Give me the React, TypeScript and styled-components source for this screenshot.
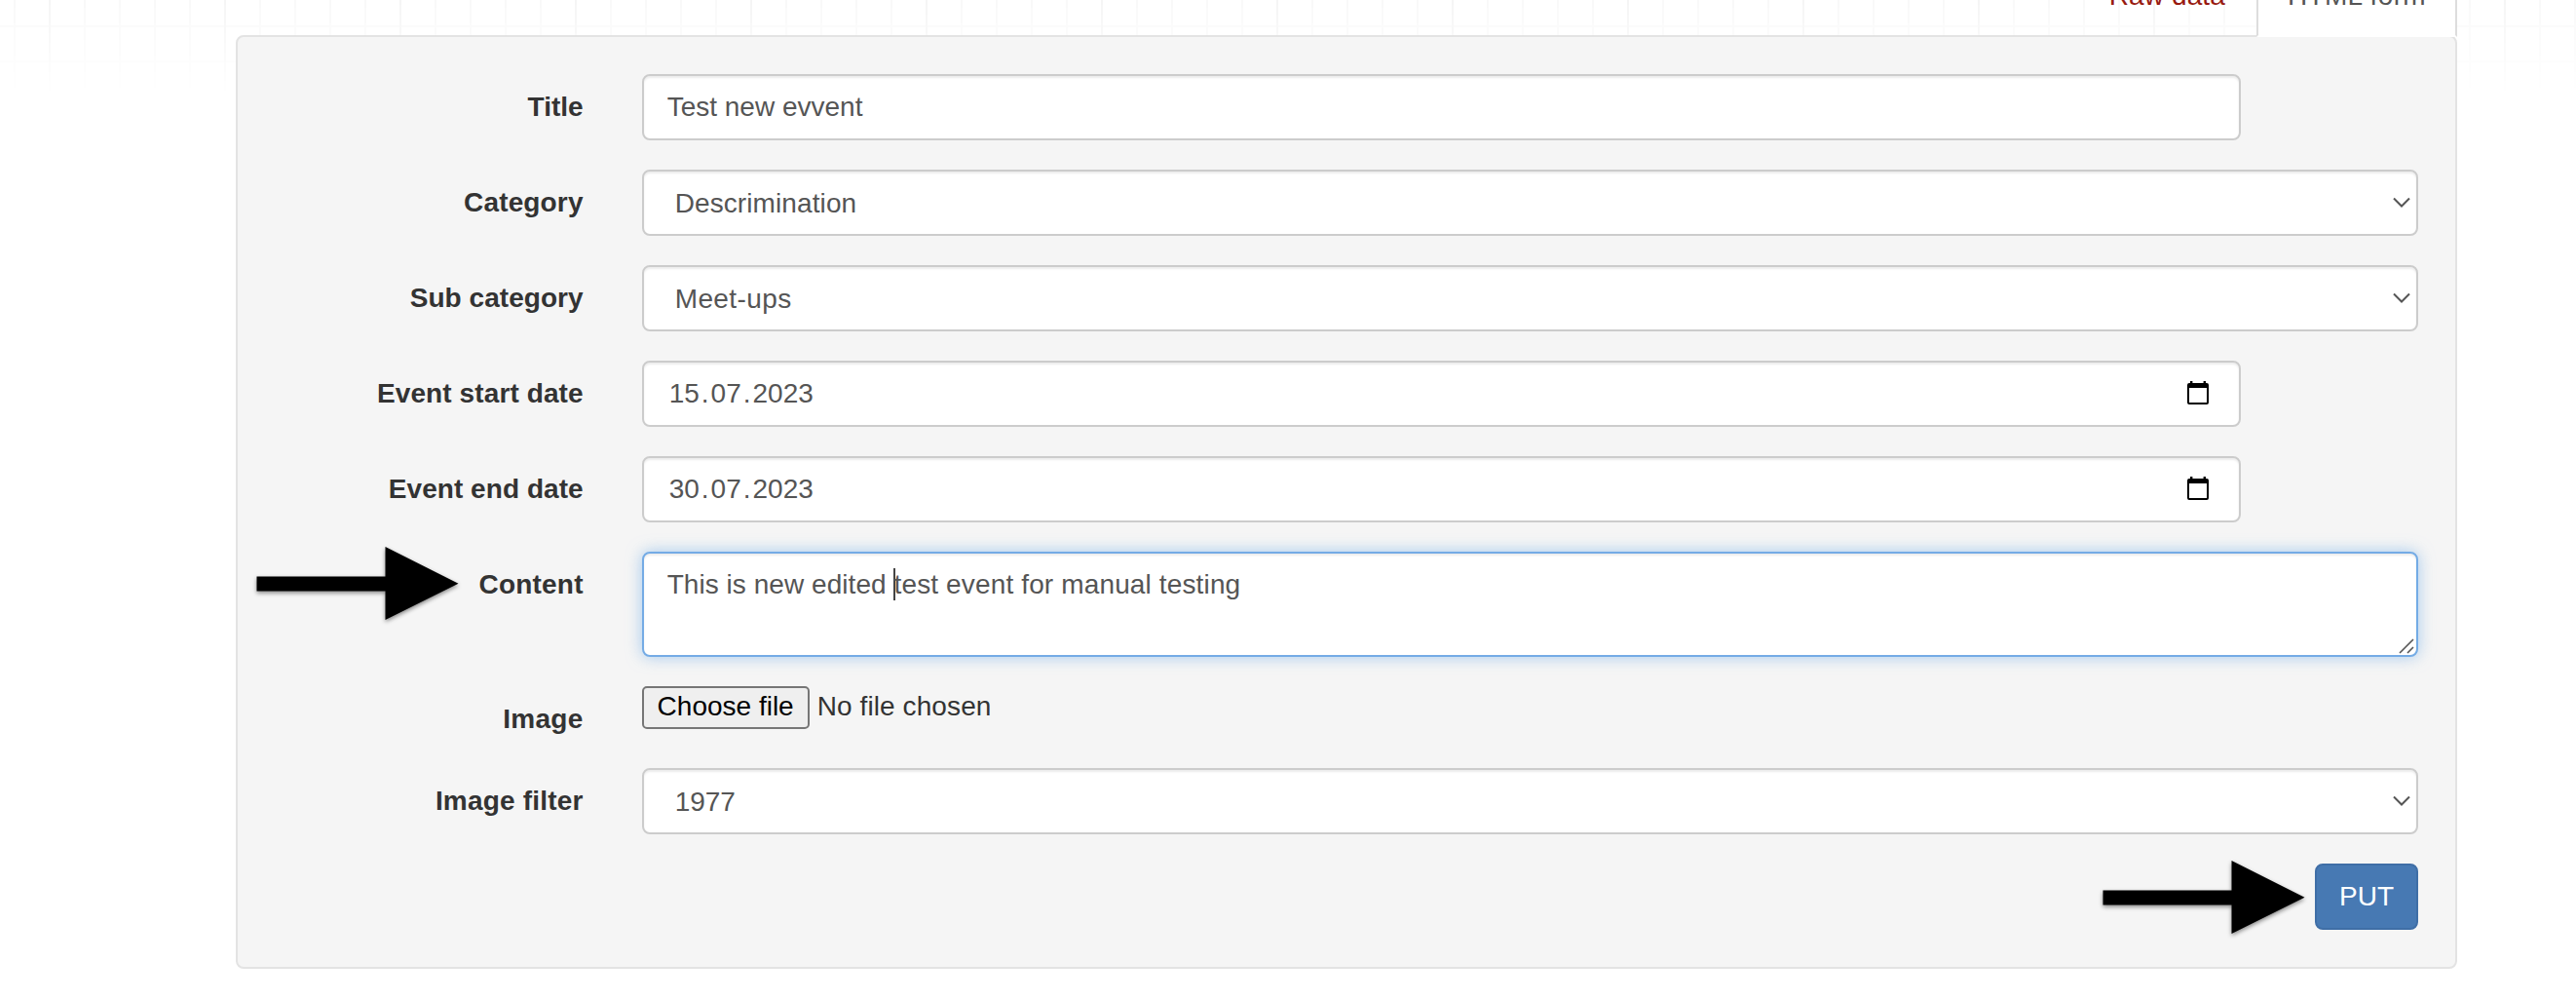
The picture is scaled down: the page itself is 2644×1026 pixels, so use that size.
import React from 'react';
import styled, { createGlobalStyle, css } from 'styled-components';

const Global = createGlobalStyle`
  *, *::before, *::after { box-sizing: border-box; }
  html, body { margin: 0; background: #fff; }
  body {
    font-family: "Liberation Sans", Arial, sans-serif;
    font-size: 28px;
    line-height: 40px;
    color: #333;
    overflow: hidden;
  }
`;

const Page = styled.div`
  position: relative;
  height: 1026px;
  overflow: hidden;
  background: #fff;
`;

const Grid = styled.div`
  position: absolute;
  inset: 0 0 auto 0;
  height: 98px;
  background-image:
    linear-gradient(to right, #f5f5f5 2px, transparent 2px),
    linear-gradient(to right, #f9f9f9 2px, transparent 2px),
    linear-gradient(to bottom, #fafafa 2px, transparent 2px);
  background-position: 50px 0, 14px 0, 0 26px;
  background-size: 180px 100%, 36px 100%, 100% 36px;
  mask-image: linear-gradient(to bottom, #000, transparent);
`;

const Container = styled.main`
  position: relative;
  width: 2280px;
  margin-left: 242px;
`;

const Tabs = styled.nav`
  position: relative;
  z-index: 1;
  display: flex;
  justify-content: flex-end;
  align-items: flex-end;
  height: 38px;
`;

const Tab = styled.a<{ $active?: boolean; $track?: number }>`
  flex: none;
  height: 84px;
  padding: 20px 30px;
  border: 2px solid ${p => (p.$active ? '#ddd' : 'transparent')};
  border-bottom-color: ${p => (p.$active ? '#fff' : 'transparent')};
  color: ${p => (p.$active ? '#555' : '#981a10')};
  background: ${p => (p.$active ? '#fff' : 'transparent')};
  letter-spacing: ${p => p.$track ?? 0}px;
  white-space: nowrap;
`;

const Well = styled.form`
  display: flex;
  flex-direction: column;
  gap: 30px;
  height: 958px;
  margin-top: -2px;
  padding: 38px;
  border: 2px solid #e3e3e3;
  border-radius: 8px;
  background: #f5f5f5;
`;

const Row = styled.div<{ $height?: number }>`
  display: grid;
  grid-template-columns: 316.67px 1823.33px;
  column-gap: 60px;
  align-items: start;
  height: ${p => p.$height ?? 68}px;
`;

const Label = styled.label<{ $track?: number }>`
  padding-top: 14px;
  font-weight: 700;
  text-align: right;
  white-space: nowrap;
  letter-spacing: ${p => p.$track ?? 0}px;
`;

const field = css`
  display: flex;
  align-items: center;
  height: 68px;
  padding: 0 24px;
  border: 2px solid #ccc;
  border-radius: 8px;
  background: #fff;
  color: #555;
  box-shadow: inset 0 2px 2px rgba(0, 0, 0, 0.075);
`;

const Input = styled.div`
  ${field}
  width: 90%;
`;

const DateInput = styled(Input)`
  justify-content: space-between;
  padding-right: 31px;
`;

const Select = styled.div`
  ${field}
  justify-content: space-between;
  padding: 0 6px 0 32px;
`;

const TextArea = styled.div`
  ${field}
  position: relative;
  align-items: flex-start;
  height: 108px;
  padding: 12px 24px;
  border-color: #74abe5;
  box-shadow: inset 0 2px 2px rgba(0, 0, 0, 0.075), 0 0 16px rgba(110, 172, 232, 0.6);
`;

const Text = styled.span<{ $track?: number }>`
  letter-spacing: ${p => p.$track ?? 0}px;
  white-space: pre;
`;

const Option = styled(Text)`
  padding-top: 2px;
`;

const DatePart = styled.span`
  padding: 0 2px;
`;

const Caret = styled.span`
  align-self: flex-start;
  width: 2px;
  height: 33px;
  margin: 3px -1px 0 -1px;
  background: #444;
`;

const ResizeGrip = styled.svg`
  position: absolute;
  right: 2px;
  bottom: 1px;
`;

const FilePicker = styled.div`
  display: flex;
  align-items: flex-start;
  gap: 8px;
`;

const FileButton = styled.button`
  width: 172px;
  height: 44px;
  padding: 0 0 2px;
  border: 2px solid #767676;
  border-radius: 5px;
  background: #efefef;
  color: #000;
  font: inherit;
  line-height: 38px;
  white-space: nowrap;
`;

const FileStatus = styled.span`
  line-height: 42px;
  letter-spacing: 0.1px;
`;

const Actions = styled.div`
  display: flex;
  justify-content: flex-end;
`;

const Submit = styled.button`
  width: 106px;
  height: 68px;
  padding: 0;
  border: 2px solid #3f6ea6;
  border-radius: 8px;
  background: #4779b3;
  color: #fff;
  font: inherit;
`;

const Pointer = styled.svg<{ $x: number; $y: number }>`
  position: absolute;
  z-index: 2;
  left: ${p => p.$x}px;
  top: ${p => p.$y}px;
  filter: drop-shadow(0 2px 2px rgba(0, 0, 0, 0.45));
`;

const CalendarIcon = styled.svg`
  margin-bottom: 2px;
`;

const Chevron = () => (
  <svg width="18" height="12" viewBox="0 0 18 12" fill="none" stroke="#555" strokeWidth="2">
    <path d="M1 1.5 9 9.5 17 1.5" />
  </svg>
);

const Calendar = () => (
  <CalendarIcon width="22" height="24" viewBox="0 0 22 24">
    <path
      fill="#000"
      fillRule="evenodd"
      d="M3 0h2.4v2h11.2V0H19v2h1a2 2 0 0 1 2 2v18a2 2 0 0 1-2 2H2a2 2 0 0 1-2-2V4a2 2 0 0 1 2-2h1zM2 7v15h18V7z"
    />
  </CalendarIcon>
);

const Arrow = ({ x, y }: { x: number; y: number }) => (
  <Pointer $x={x} $y={y} width="208" height="76" viewBox="0 0 208 76">
    <path d="M0.5 30.5H132.5V0L207.5 37.7 132.5 75V45.5H0.5z" />
  </Pointer>
);

const DateField = ({ value }: { value: string }) => {
  const [d, m, y] = value.split('.');
  return (
    <DateInput>
      <Text>
        <DatePart>{d}</DatePart>.<DatePart>{m}</DatePart>.<DatePart>{y}</DatePart>
      </Text>
      <Calendar />
    </DateInput>
  );
};

export default function App() {
  return (
    <Page>
      <Global />
      <Grid />
      <Container>
        <Tabs>
          <Tab $track={0.1}>Raw data</Tab>
          <Tab $active $track={0.35}>HTML form</Tab>
        </Tabs>
        <Well>
          <Row>
            <Label>Title</Label>
            <Input><Text>Test new evvent</Text></Input>
          </Row>
          <Row>
            <Label $track={0.15}>Category</Label>
            <Select><Option $track={0.1}>Descrimination</Option><Chevron /></Select>
          </Row>
          <Row>
            <Label $track={0.05}>Sub category</Label>
            <Select><Option $track={0.4}>Meet-ups</Option><Chevron /></Select>
          </Row>
          <Row>
            <Label $track={0.1}>Event start date</Label>
            <DateField value="15.07.2023" />
          </Row>
          <Row>
            <Label $track={0.05}>Event end date</Label>
            <DateField value="30.07.2023" />
          </Row>
          <Row $height={108}>
            <Label $track={0.2}>Content</Label>
            <TextArea>
              <Text $track={0.05}>This is new edited </Text>
              <Caret />
              <Text $track={0.14}>test event for manual testing</Text>
              <ResizeGrip width="16" height="16" viewBox="0 0 16 16" stroke="#555" strokeWidth="1.6">
                <path d="M1 15 15 1M9 15l6-6" />
              </ResizeGrip>
            </TextArea>
          </Row>
          <Row $height={54}>
            <Label $track={0.3}>Image</Label>
            <FilePicker>
              <FileButton type="button">Choose file</FileButton>
              <FileStatus>No file chosen</FileStatus>
            </FilePicker>
          </Row>
          <Row>
            <Label $track={0.2}>Image filter</Label>
            <Select><Option>1977</Option><Chevron /></Select>
          </Row>
          <Actions>
            <Submit type="button">PUT</Submit>
          </Actions>
        </Well>
      </Container>
      <Arrow x={263} y={561} />
      <Arrow x={2158} y={883} />
    </Page>
  );
}
